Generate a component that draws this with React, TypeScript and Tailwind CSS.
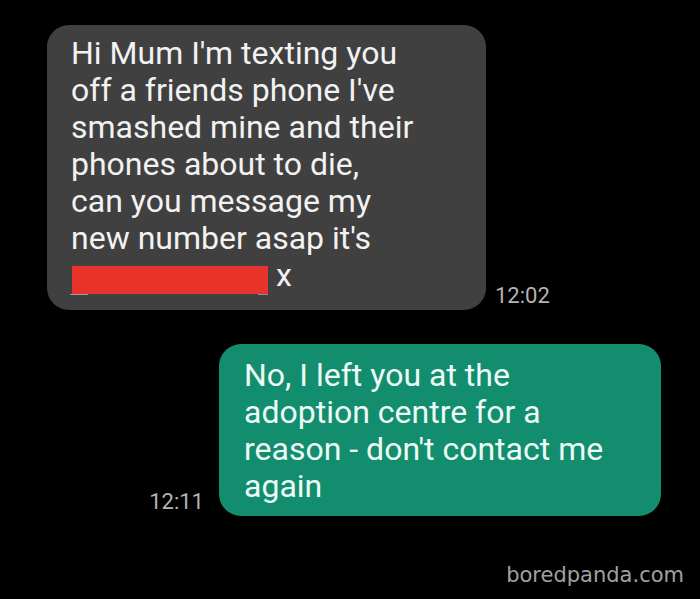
import React from "react";

const grayLines = [
  "Hi Mum I'm texting you",
  "off a friends phone I've",
  "smashed mine and their",
  "phones about to die,",
  "can you message my",
  "new number asap it's",
];

const greenLines = [
  "No, I left you at the",
  "adoption centre for a",
  "reason - don't contact me",
  "again",
];

export default function App() {
  return (
    <div className="w-[700px] h-[599px] bg-black flex flex-col overflow-hidden font-['Roboto',sans-serif]">
      <div className="flex items-end pt-[25px] pl-[47px]">
        <div className="w-[439px] bg-[#404040] rounded-[22px] pl-[24px] pt-[10px] pb-[16px] text-[32px] leading-[37px] text-[#f2f2f2]">
          {grayLines.map((l) => (
            <div key={l} className="whitespace-nowrap">{l}</div>
          ))}
          <div className="whitespace-nowrap">
            <span className="relative inline-block ml-[1px] h-[28px] w-[196px] bg-[#e8332a] align-[-8px]">
              <span className="absolute left-[-2px] bottom-[-1px] w-[18px] h-[1px] bg-[#9a9aa8]"></span>
              <span className="absolute right-[0px] bottom-[-1px] w-[10px] h-[1px] bg-[#8a8aa8]"></span>
            </span>{" "}
            x
          </div>
        </div>
        <div className="ml-[9px] mb-[3px] text-[22px] leading-none text-[#b4b4b4]">12:02</div>
      </div>

      <div className="flex items-end justify-end pr-[39px] mt-[34px]">
        <div className="mr-[15px] mb-[3px] text-[22px] leading-none text-[#b4b4b4]">12:11</div>
        <div className="w-[442px] bg-[#128e6e] rounded-[22px] pl-[25px] pt-[13px] pb-[11px] text-[32px] leading-[37px] text-[#eefaf5]">
          {greenLines.map((l) => (
            <div key={l} className="whitespace-nowrap">{l}</div>
          ))}
        </div>
      </div>

      <div className="flex justify-end pr-[16px] mt-[49px]">
        <span className="font-['DejaVu_Sans',sans-serif] text-[21px] leading-none text-[#a0a0a0]">boredpanda.com</span>
      </div>
    </div>
  );
}
